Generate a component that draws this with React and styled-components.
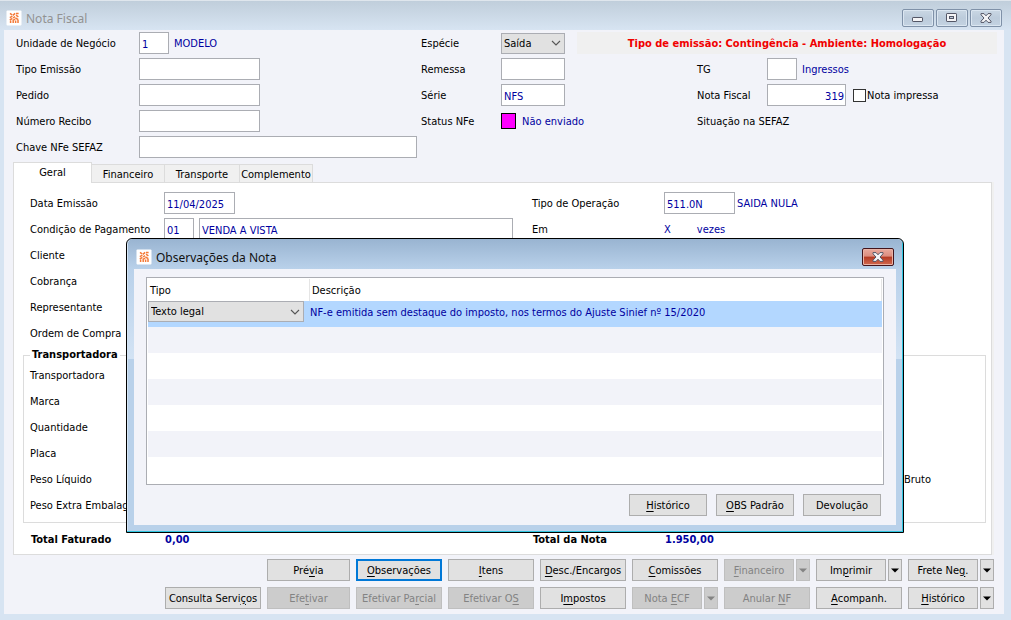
import React from 'react'
import styled, { createGlobalStyle, css } from 'styled-components'

const colors = {
  frame: '#d7e4f2',
  face: '#f2f3f9',
  navy: '#0000a0',
  border: '#abadb3',
  line: '#dcdcdc',
  button: '#e1e1e1',
  buttonOff: '#cccccc',
  textOff: '#838383',
  focus: '#0078d7'
}

const GlobalStyle = createGlobalStyle`
  * {
    box-sizing: border-box;
  }

  body {
    margin: 0;
    background: ${colors.frame};
    color: #000;
    font: 11px/14px "DejaVu Sans Condensed", "Noto Sans", sans-serif;
  }

  button, input, select {
    margin: 0;
    font: inherit;
    color: inherit;
  }
`

const Window = styled.div`
  position: relative;
  padding: 0 7px 6px 4px;
  border-top: 1px solid #dfe6ed;
  background: ${colors.frame};
`

const TitleBar = styled.header`
  display: flex;
  align-items: center;
  gap: 4px;
  height: 29px;
  margin: 0 -7px 0 -4px;
  padding: 5px 9px 0 6px;
  background: linear-gradient(#c0cedb, ${colors.frame});
`

const Title = styled.h1`
  flex: 1;
  margin: 0;
  padding-top: 2px;
  color: ${({ $active }) => $active ? '#111' : '#929292'};
  font: 12px/16px "Noto Sans", sans-serif;
`

const CaptionButtons = styled.div`
  display: flex;
  gap: 2px;
`

const CaptionButton = styled.button`
  display: flex;
  align-items: center;
  justify-content: center;
  width: 32px;
  height: 18px;
  padding: 0;
  border: 1px solid #7f91a8;
  border-radius: 2px;
  background: linear-gradient(#cad7e4, #bccbdb 50%, #c4d3e2);
  box-shadow: inset 0 0 0 1px #dbe6f1;

  ${({ $danger }) => $danger && css`
    border-color: #43141b;
    background: linear-gradient(#e9a99d, #dd8d7e 45%, #b53a23 50%, #d0694f);
    box-shadow: inset 0 0 0 1px #e9b3a6;
  `}
`

const Body = styled.main`
  padding: 2px 10px 5px 9px;
  background: ${colors.face};
`

const HeaderForm = styled.div`
  display: grid;
  grid-template-columns: 123px minmax(278px, 282px) 80px 196px 70px 1fr;
  grid-auto-rows: 22px;
  row-gap: 4px;
  align-items: center;
  margin: 0 -3px 4px 3px;
`

const Group = styled.div`
  display: flex;
  align-items: center;
  gap: ${({ $gap }) => $gap || 5}px;
  grid-column: ${({ $span }) => $span ? `span ${$span}` : 'auto'};
`

const Label = styled.label`
  padding-top: 2px;
  white-space: nowrap;
`

const Value = styled.span`
  padding-top: 2px;
  color: ${colors.navy};
  white-space: nowrap;
`

const TextInput = styled.input`
  width: ${({ $width }) => $width}px;
  height: 22px;
  padding: 2px 1px 0 2px;
  border: 1px solid ${colors.border};
  border-radius: 0;
  outline: 0;
  background: #fff;
  color: ${colors.navy};
  text-align: ${({ $align }) => $align || 'left'};
`

const SelectBox = styled.div`
  display: grid;
  align-items: center;
  width: ${({ $width }) => $width}px;

  select, svg {
    grid-area: 1 / 1;
  }

  select {
    appearance: none;
    width: 100%;
    height: 21px;
    padding: 1px 20px 0 2px;
    border: 1px solid ${colors.border};
    border-radius: 0;
    background: ${colors.button};
  }

  svg {
    justify-self: end;
    margin-right: 4px;
    pointer-events: none;
  }
`

const Banner = styled.strong`
  flex: 1;
  height: 22px;
  padding-top: 1px;
  background: #f0f0f0;
  color: #f00000;
  line-height: 22px;
  text-align: center;
  white-space: nowrap;
`

const StatusSwatch = styled.span`
  width: 15px;
  height: 16px;
  border: 1px solid #000;
  background: #f0f;
`

const CheckLabel = styled.div`
  display: flex;
  align-items: center;
  gap: 1px;

  input {
    appearance: none;
    width: 13px;
    height: 13px;
    border: 1px solid #333;
    background: #fff;
  }
`

const Tabs = styled.div`
  display: flex;
  align-items: flex-end;
`

const Tab = styled.button`
  width: ${({ $width }) => $width}px;
  height: 18px;
  padding: 2px 0 0;
  border: 1px solid ${colors.line};
  border-width: 1px 1px 0 0;
  background: #f0f0f0;

  ${({ $active }) => $active && css`
    position: relative;
    height: 21px;
    margin-bottom: -1px;
    padding: 0;
    border-left-width: 1px;
    background: #fff;
  `}
`

const Panel = styled.section`
  margin-right: 2px;
  padding: 9px 5px 4px 9px;
  border: 1px solid ${colors.line};
  background: #fff;
  box-shadow: 2px 0 0 #f0f0f0;
`

const PanelRows = styled.div`
  display: grid;
  grid-template-columns: 134px 368px 132px 1fr;
  grid-auto-rows: 22px;
  row-gap: 4px;
  align-items: center;
  padding-left: 7px;
`

const Carrier = styled.fieldset`
  min-width: 0;
  margin: 4px 0 5px;
  padding: 2px 0 6px 6px;
  border: 1px solid ${colors.line};

  legend {
    margin-left: 0;
    padding: 0 2px;
    font-weight: bold;
  }
`

const CarrierRow = styled.div`
  display: flex;
  justify-content: space-between;
  align-items: center;
  height: 22px;
  margin-top: 4px;
  padding-right: 54px;

  &:first-of-type {
    margin-top: 0;
  }
`

const Totals = styled(PanelRows)`
  padding-left: 8px;
  font-weight: bold;
`

const Actions = styled.footer`
  display: grid;
  grid-template-columns: 96px 83px repeat(7, 86px);
  gap: 6px;
  justify-content: end;
  margin-top: 4px;
`

const Split = styled.div`
  display: flex;
  gap: 2px;
`

const Button = styled.button`
  flex: 1;
  height: 22px;
  padding: 1px 0 0;
  border: 1px solid #adadad;
  background: ${colors.button};
  white-space: nowrap;

  &:disabled {
    border-color: #bfbfbf;
    background: ${colors.buttonOff};
    color: ${colors.textOff};
  }

  ${({ $focused }) => $focused && css`
    border: 2px solid ${colors.focus};
  `}

  u {
    text-underline-offset: 2px;
  }
`

const ArrowButton = styled(Button)`
  display: flex;
  flex: 0 0 14px;
  align-items: center;
  justify-content: center;
`

const Dialog = styled.div`
  position: absolute;
  top: 237px;
  left: 126px;
  right: 107px;
  padding: 0 7px 7px;
  border: 1px solid #000;
  border-radius: 6px 6px 0 0;
  background: linear-gradient(#b9d1ea 30px, #d3e3f4 120px, #b9d1ea 120px);
  box-shadow: inset -1px -1px 0 #2fc5e0, inset 1px 1px 0 #d5e6f5;
`

const DialogTitle = styled(TitleBar)`
  height: 30px;
  margin: 0 -6px;
  padding: 6px 8px 0;
  border-radius: 5px 5px 0 0;
  background: linear-gradient(#99b4d1, #b9d1ea);
`

const DialogBody = styled.div`
  padding: 8px 12px 9px;
  background: ${colors.face};
`

const Grid = styled.div`
  height: 208px;
  padding: 1px;
  overflow: hidden;
  border: 1px solid ${colors.border};
  background: #fff;
`

const Table = styled.table`
  width: 100%;
  border-spacing: 0;
  table-layout: fixed;

  th {
    height: 22px;
    padding: 2px 2px 0;
    border-right: 1px solid #e5e5e5;
    font-weight: normal;
    text-align: left;
  }

  th:first-child {
    width: 162px;
  }

  td {
    height: 26px;
    padding: 0;
    vertical-align: top;
  }

  tbody tr:nth-child(2n) {
    background: ${colors.face};
  }

  tbody tr:first-child {
    background: #b3d7ff;
    color: ${colors.navy};
  }

  td + td {
    line-height: 23px;
  }

  select {
    color: #000;
  }
`

const DialogActions = styled.div`
  display: grid;
  grid-template-columns: repeat(3, 78px);
  gap: 9px;
  justify-content: end;
  margin: 9px 3px 0 0;
`

const Logo = () => (
  <svg width="16" height="16" viewBox="0 0 16 16" aria-hidden="true">
    <rect x="0.5" y="0.5" width="15" height="15" rx="1" fill="#fff" />
    <g fill="none" stroke="#f47a38" strokeWidth="1.5">
      <path d="M4 3.4l2 1.4M6.8 5.4l2.4-2M10 3.4h2.6M10 5.2l2.4 1.6" />
      <path d="M3.8 7.6l2.6-1.4M7 8l2-1.4M3.8 10l2.6-1.6M9.4 8l3 1.6" />
      <path d="M4.6 13v-2.4M7.2 13v-2.8l2-1M9.6 13v-2.4M12 13v-3" />
    </g>
  </svg>
)

const Chevron = () => (
  <svg width="10" height="6" viewBox="0 0 10 6" aria-hidden="true">
    <path d="M1 1l4 4 4-4" fill="none" stroke="#555" strokeWidth="1.1" />
  </svg>
)

const CloseGlyph = () => (
  <svg width="12" height="10" viewBox="0 0 12 10" aria-hidden="true">
    <path d="M1 .6h3l2 2.2 2-2.2h3v1.2L8 5l3 3.2v1.2H8L6 7.2 4 9.4H1V8.2L4 5 1 1.8z" fill="#f4f4f6" stroke="#535666" />
  </svg>
)

const MinimizeGlyph = () => (
  <svg width="12" height="10" viewBox="0 0 12 10" aria-hidden="true">
    <rect x="0.5" y="4.5" width="10" height="4" rx="0.6" fill="#f4f4f6" stroke="#535666" />
  </svg>
)

const MaximizeGlyph = () => (
  <svg width="12" height="10" viewBox="0 0 12 10" aria-hidden="true">
    <rect x="0.5" y="0.5" width="10" height="8" rx="0.6" fill="#f4f4f6" stroke="#535666" />
    <rect x="3.5" y="3.5" width="4" height="2" fill="#c0cedb" stroke="#535666" />
  </svg>
)

const Arrow = () => (
  <svg width="8" height="5" viewBox="0 0 8 5" aria-hidden="true">
    <path d="M0 .5h8L4 4.5z" fill="currentColor" />
  </svg>
)

const tabs = [
  { name: 'Geral', width: 79 },
  { name: 'Financeiro', width: 73 },
  { name: 'Transporte', width: 75 },
  { name: 'Complemento', width: 73 }
]

const carrierRows = ['Transportadora', 'Marca', 'Quantidade', 'Placa', 'Peso Líquido', 'Peso Extra Embalagem']

// each text is split around its access key
const actions = [
  { text: ['Pré', 'v', 'ia'], first: true },
  { text: ['', 'O', 'bservações'], focused: true },
  { text: ['', 'I', 'tens'] },
  { text: ['', 'D', 'esc./Encargos'] },
  { text: ['', 'C', 'omissões'] },
  { text: ['', 'F', 'inanceiro'], disabled: true, menu: true },
  { text: ['Im', 'p', 'rimir'], menu: true },
  { text: ['Frete Ne', 'g', '.'], menu: true },
  { text: ['Consulta Servi', 'ç', 'os'] },
  { text: ['Efe', 't', 'ivar'], disabled: true },
  { text: ['Efetivar Pa', 'r', 'cial'], disabled: true },
  { text: ['Efetivar O', 'S', ''], disabled: true },
  { text: ['I', 'm', 'postos'] },
  { text: ['Nota ', 'E', 'CF'], disabled: true, menu: true },
  { text: ['Anular ', 'N', 'F'], disabled: true },
  { text: ['', 'A', 'companh.'] },
  { text: ['', 'H', 'istórico'], menu: true }
]

const KeyText = ({ text }) => <>{text[0]}<u>{text[1]}</u>{text[2]}</>

const ActionSlot = styled(Split)`
  grid-column: ${({ $first }) => $first ? '2' : 'auto'};
`

const Field = ({ id, label, ...rest }) => (
  <>
    <Label htmlFor={id}>{label}</Label>
    <TextInput id={id} {...rest} />
  </>
)

const NotaForm = () => (
  <HeaderForm>
    <Label htmlFor="unidade">Unidade de Negócio</Label>
    <Group>
      <TextInput id="unidade" $width={30} defaultValue="1" />
      <Value>MODELO</Value>
    </Group>
    <Label htmlFor="especie">Espécie</Label>
    <Group $span={3} $gap={12}>
      <SelectBox $width={64}>
        <select id="especie"><option>Saída</option></select>
        <Chevron />
      </SelectBox>
      <Banner>Tipo de emissão: Contingência - Ambiente: Homologação</Banner>
    </Group>

    <Field id="tipo" label="Tipo Emissão" $width={121} />
    <Field id="remessa" label="Remessa" $width={64} />
    <Label htmlFor="tg">TG</Label>
    <Group>
      <TextInput id="tg" $width={30} />
      <Value>Ingressos</Value>
    </Group>

    <Field id="pedido" label="Pedido" $width={121} />
    <Field id="serie" label="Série" $width={64} defaultValue="NFS" />
    <Label htmlFor="nota">Nota Fiscal</Label>
    <Group $gap={7}>
      <TextInput id="nota" $width={79} $align="right" defaultValue="319" />
      <CheckLabel>
        <input id="impressa" type="checkbox" />
        <Label htmlFor="impressa">Nota impressa</Label>
      </CheckLabel>
    </Group>

    <Field id="recibo" label="Número Recibo" $width={121} />
    <Label as="span">Status NFe</Label>
    <Group $gap={6}>
      <StatusSwatch />
      <Value>Não enviado</Value>
    </Group>
    <Group $span={2}><Label as="span">Situação na SEFAZ</Label></Group>

    <Field id="chave" label="Chave NFe SEFAZ" $width={278} />
  </HeaderForm>
)

const GeralPanel = () => (
  <Panel>
    <PanelRows>
      <Field id="data" label="Data Emissão" $width={71} defaultValue="11/04/2025" />
      <Label htmlFor="operacao">Tipo de Operação</Label>
      <Group $gap={2}>
        <TextInput id="operacao" $width={71} defaultValue="511.0N" />
        <Value>SAIDA NULA</Value>
      </Group>

      <Label htmlFor="condicao">Condição de Pagamento</Label>
      <Group>
        <TextInput id="condicao" $width={30} defaultValue="01" />
        <TextInput aria-label="Descrição da condição" $width={314} defaultValue="VENDA A VISTA" />
      </Group>
      <Label as="span">Em</Label>
      <Group $gap={26}>
        <Value>X</Value>
        <Value>vezes</Value>
      </Group>

      {['Cliente', 'Cobrança', 'Representante', 'Ordem de Compra'].map((name) => (
        <Group key={name} $span={4}><Label as="span">{name}</Label></Group>
      ))}
    </PanelRows>

    <Carrier>
      <legend>Transportadora</legend>
      {carrierRows.map((name) => (
        <CarrierRow key={name}>
          <Label as="span">{name}</Label>
          {name === 'Peso Líquido' && <Label as="span">Bruto</Label>}
        </CarrierRow>
      ))}
    </Carrier>

    <Totals>
      <Label as="span">Total Faturado</Label>
      <Value>0,00</Value>
      <Label as="span">Total da Nota</Label>
      <Value>1.950,00</Value>
    </Totals>
  </Panel>
)

const ObservacoesDialog = () => (
  <Dialog role="dialog" aria-label="Observações da Nota">
    <DialogTitle>
      <Logo />
      <Title as="h2" $active>Observações da Nota</Title>
      <CaptionButton $danger aria-label="Fechar"><CloseGlyph /></CaptionButton>
    </DialogTitle>
    <DialogBody>
      <Grid>
        <Table>
          <thead>
            <tr>
              <th>Tipo</th>
              <th>Descrição</th>
            </tr>
          </thead>
          <tbody>
            <tr>
              <td>
                <SelectBox $width={156}>
                  <select aria-label="Tipo"><option>Texto legal</option></select>
                  <Chevron />
                </SelectBox>
              </td>
              <td>NF-e emitida sem destaque do imposto, nos termos do Ajuste Sinief nº 15/2020</td>
            </tr>
            {/* empty striped rows */}
            {[1, 2, 3, 4, 5, 6].map((row) => <tr key={row}><td /><td /></tr>)}
          </tbody>
        </Table>
      </Grid>
      <DialogActions>
        <Button><KeyText text={['', 'H', 'istórico']} /></Button>
        <Button><KeyText text={['', 'O', 'BS Padrão']} /></Button>
        <Button>Devolução</Button>
      </DialogActions>
    </DialogBody>
  </Dialog>
)

const App = () => (
  <Window>
    <GlobalStyle />
    <TitleBar>
      <Logo />
      <Title>Nota Fiscal</Title>
      <CaptionButtons>
        <CaptionButton aria-label="Minimizar"><MinimizeGlyph /></CaptionButton>
        <CaptionButton aria-label="Maximizar"><MaximizeGlyph /></CaptionButton>
        <CaptionButton aria-label="Fechar"><CloseGlyph /></CaptionButton>
      </CaptionButtons>
    </TitleBar>
    <Body>
      <NotaForm />
      <Tabs>
        {tabs.map(({ name, width }, index) => (
          <Tab key={name} $width={width} $active={index === 0}>{name}</Tab>
        ))}
      </Tabs>
      <GeralPanel />
      <Actions>
        {actions.map(({ text, first, focused, disabled, menu }) => (
          <ActionSlot key={text.join('')} $first={first}>
            <Button $focused={focused} disabled={disabled}><KeyText text={text} /></Button>
            {menu && <ArrowButton disabled={disabled} aria-label="Mais opções"><Arrow /></ArrowButton>}
          </ActionSlot>
        ))}
      </Actions>
    </Body>
    <ObservacoesDialog />
  </Window>
)

export default App
